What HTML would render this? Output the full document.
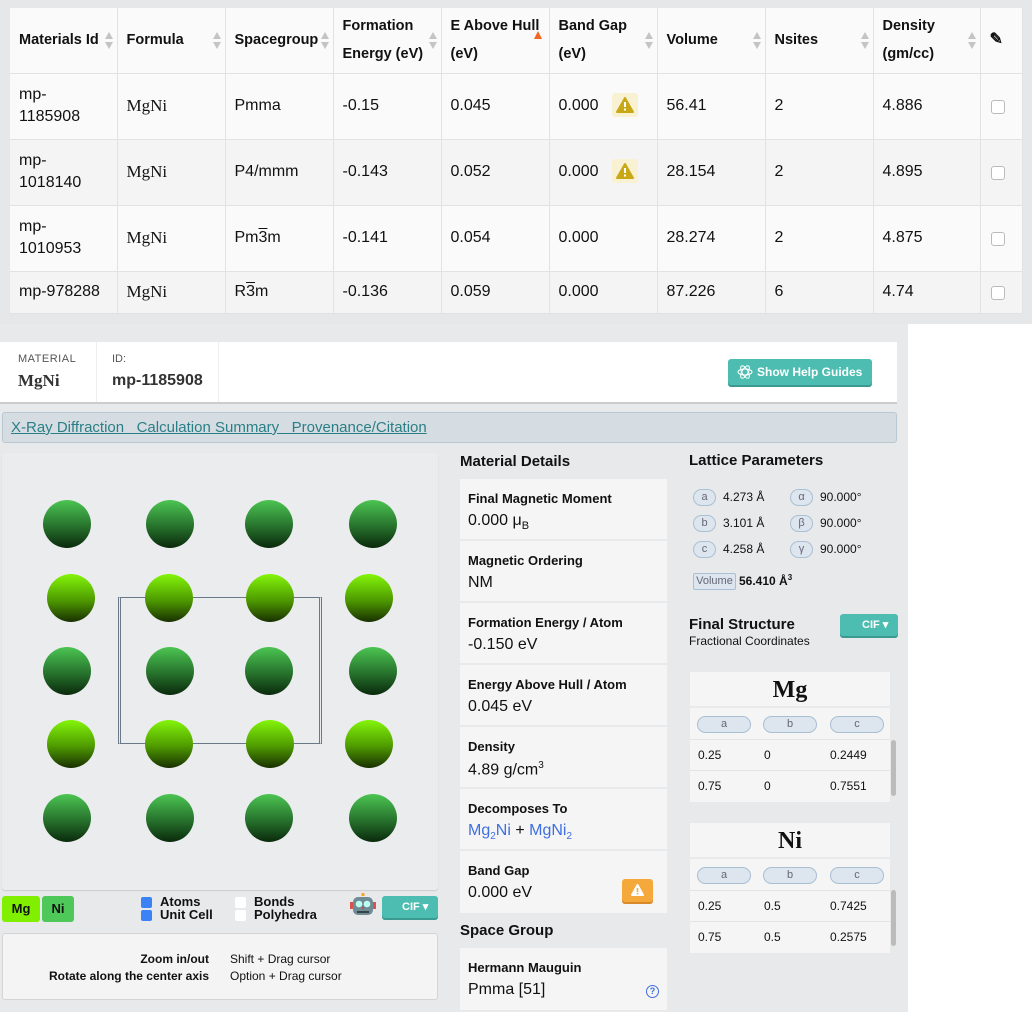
<!DOCTYPE html>
<html><head><meta charset="utf-8">
<style>
*{box-sizing:border-box;margin:0;padding:0}
body{width:1032px;height:1012px;position:relative;background:#fff;font-family:"Liberation Sans",Arial,sans-serif;color:#111;overflow:hidden}
.a{position:absolute}
.top{left:0;top:0;width:1032px;height:324px;background:#e6e7e9}
table.t{position:absolute;left:10px;top:8px;border-collapse:collapse;background:#fafafa;table-layout:fixed;width:1012px}
table.t td,table.t th{border-right:1px solid #e2e2e2;border-bottom:1px solid #e2e2e2;padding:0 9px;text-align:left;vertical-align:middle;font-size:16px;position:relative}
table.t th{font-size:14.5px;font-weight:bold;line-height:28px;height:65px;background:#fafafa;padding-right:6px}
table.t tr.r td{height:66px;line-height:22px}
table.t tr.s td{height:42px;line-height:22px;background:#f4f4f4}
table.t tr:nth-child(odd).r td{background:#f4f4f4}
.srt{position:absolute;right:4px;top:24px;width:8px;height:18px}
.srt:before{content:"";position:absolute;left:0;top:0;border:4px solid transparent;border-bottom:7px solid #c4c4c4;border-top:0}
.srt:after{content:"";position:absolute;left:0;top:10px;border:4px solid transparent;border-top:7px solid #c4c4c4;border-bottom:0}
.serif{font-family:"Liberation Serif",serif;font-size:17px!important}
.ov{text-decoration:overline}
.cb{position:absolute;right:17px;top:50%;margin-top:-6px;width:14px;height:14px;border:1px solid #bbb;border-radius:3px;background:#fff}
.warn{position:absolute;left:62px;top:50%;margin-top:-13px;width:26px;height:24px;background:#f8f1d2;border-radius:3px}
.lower{left:0;top:324px;width:908px;height:688px;background:#e8e9eb}
.atom{position:absolute;width:48px;height:48px;border-radius:50%}
.d{background:linear-gradient(#4cc552,#2a7a30 50%,#0a2a0c)}
.b{background:linear-gradient(#84f50a,#4e9a00 55%,#183000)}
.card{position:absolute;left:460px;width:207px;background:#f5f5f5;border-bottom:2px solid #e8e9eb;padding:12px 8px}
.card .l{font-weight:bold;font-size:13px}
.card .v{font-size:16px;margin-top:6px}
.pill{position:absolute;height:17px;border:1px solid #a9bfd3;background:#dde6ee;border-radius:9px;font-size:11px;color:#667;text-align:center;line-height:15px}
.ct{position:absolute;left:690px;width:200px;background:#f5f5f5}
.ct .h{height:36px;border-bottom:2px solid #e8e9eb;font-family:"Liberation Serif",serif;font-weight:bold;font-size:24px;text-align:center;line-height:36px}
.ct .p{height:32px;border-bottom:1px solid #e4e4e4;position:relative}
.ct .row{height:31px;border-bottom:1px solid #e4e4e4;font-size:12px;position:relative;line-height:31px}
.ct .row span{position:absolute}
.btn{position:absolute;background:#4dbdb1;color:#fff;font-weight:bold;border-radius:3px;box-shadow:0 2px 0 #3a9a90}
</style></head><body>
<div class="a top"></div>
<table class="t">
<colgroup><col style="width:107px"><col style="width:108px"><col style="width:108px"><col style="width:108px"><col style="width:108px"><col style="width:108px"><col style="width:108px"><col style="width:108px"><col style="width:107px"><col style="width:42px"></colgroup>
<tr><th>Materials Id<span class="srt"></span></th><th>Formula<span class="srt"></span></th><th>Spacegroup<span class="srt"></span></th><th>Formation Energy (eV)<span class="srt"></span></th><th>E Above Hull (eV)<span style="position:absolute;left:92px;top:23px;border:4px solid transparent;border-bottom:8px solid #f26522;border-top:0"></span></th><th>Band Gap (eV)<span class="srt"></span></th><th>Volume<span class="srt"></span></th><th>Nsites<span class="srt"></span></th><th>Density (gm/cc)<span class="srt"></span></th><th style="font-size:16px">✎</th></tr>
<tr class="r"><td>mp-<br>1185908</td><td class="serif">MgNi</td><td>Pmma</td><td>-0.15</td><td>0.045</td><td>0.000<span class="warn"><svg width="26" height="24"><path d="M13 5 L21 19 L5 19Z" fill="#c9a818" stroke="#c9a818" stroke-linejoin="round" stroke-width="2"/><rect x="12" y="9" width="2" height="5" fill="#fff"/><rect x="12" y="15.5" width="2" height="2" fill="#fff"/></svg></span></td><td>56.41</td><td>2</td><td>4.886</td><td><span class="cb"></span></td></tr>
<tr class="r"><td>mp-<br>1018140</td><td class="serif">MgNi</td><td>P4/mmm</td><td>-0.143</td><td>0.052</td><td>0.000<span class="warn"><svg width="26" height="24"><path d="M13 5 L21 19 L5 19Z" fill="#c9a818" stroke="#c9a818" stroke-linejoin="round" stroke-width="2"/><rect x="12" y="9" width="2" height="5" fill="#fff"/><rect x="12" y="15.5" width="2" height="2" fill="#fff"/></svg></span></td><td>28.154</td><td>2</td><td>4.895</td><td><span class="cb"></span></td></tr>
<tr class="r"><td>mp-<br>1010953</td><td class="serif">MgNi</td><td>Pm<span class="ov">3</span>m</td><td>-0.141</td><td>0.054</td><td>0.000</td><td>28.274</td><td>2</td><td>4.875</td><td><span class="cb"></span></td></tr>
<tr class="s"><td>mp-978288</td><td class="serif">MgNi</td><td>R<span class="ov">3</span>m</td><td>-0.136</td><td>0.059</td><td>0.000</td><td>87.226</td><td>6</td><td>4.74</td><td><span class="cb"></span></td></tr>
</table>

<div class="a lower"></div>
<div class="a" style="left:0;top:342px;width:897px;height:62px;background:#fff;border-bottom:2px solid #ccc"></div>
<div class="a" style="left:96px;top:342px;width:1px;height:60px;background:#eee"></div>
<div class="a" style="left:218px;top:342px;width:1px;height:60px;background:#eee"></div>
<div class="a" style="left:18px;top:353px;font-size:11px;color:#555;letter-spacing:.5px">MATERIAL</div>
<div class="a" style="left:18px;top:371px;font-size:17px;font-weight:bold;color:#333;font-family:'Liberation Serif',serif">MgNi</div>
<div class="a" style="left:112px;top:353px;font-size:11px;color:#555">ID:</div>
<div class="a" style="left:112px;top:372px;font-size:16px;font-weight:bold;color:#333">mp-1185908</div>
<div class="btn" style="left:728px;top:359px;width:144px;height:26px;font-size:12px;line-height:26px;padding-left:29px">Show Help Guides</div>
<svg class="a" style="left:737px;top:364px" width="16" height="16" fill="none" stroke="#fff" stroke-width="1"><ellipse cx="8" cy="8" rx="7" ry="3"/><ellipse cx="8" cy="8" rx="7" ry="3" transform="rotate(60 8 8)"/><ellipse cx="8" cy="8" rx="7" ry="3" transform="rotate(-60 8 8)"/></svg>
<div class="a" style="left:2px;top:412px;width:895px;height:31px;background:#d6dde2;border:1px solid #b8c8d2;border-radius:3px;font-size:15px;line-height:29px;color:#2a7f86;padding-left:8px;text-decoration:underline">X-Ray Diffraction&nbsp;&nbsp; Calculation Summary&nbsp;&nbsp; Provenance/Citation</div>

<div class="a" style="left:2px;top:453px;width:436px;height:437px;background:#ebecee;border-radius:3px;box-shadow:0 1px 1px #ccc"></div>
<div class="a" style="left:118px;top:597px;width:204px;height:147px;border:1px solid #6a7888;border-left:3px double #6a7888;border-right:3px double #6a7888"></div>
<div class="atom d" style="left:43px;top:500px"></div><div class="atom d" style="left:146px;top:500px"></div><div class="atom d" style="left:245px;top:500px"></div><div class="atom d" style="left:349px;top:500px"></div>
<div class="atom b" style="left:47px;top:574px"></div><div class="atom b" style="left:145px;top:574px"></div><div class="atom b" style="left:246px;top:574px"></div><div class="atom b" style="left:345px;top:574px"></div>
<div class="atom d" style="left:43px;top:647px"></div><div class="atom d" style="left:146px;top:647px"></div><div class="atom d" style="left:245px;top:647px"></div><div class="atom d" style="left:349px;top:647px"></div>
<div class="atom b" style="left:47px;top:720px"></div><div class="atom b" style="left:145px;top:720px"></div><div class="atom b" style="left:246px;top:720px"></div><div class="atom b" style="left:345px;top:720px"></div>
<div class="atom d" style="left:43px;top:794px"></div><div class="atom d" style="left:146px;top:794px"></div><div class="atom d" style="left:245px;top:794px"></div><div class="atom d" style="left:349px;top:794px"></div>

<div class="a" style="left:2px;top:896px;width:38px;height:26px;background:#80f000;border-radius:3px;font-size:13px;font-weight:bold;text-align:center;line-height:26px">Mg</div>
<div class="a" style="left:42px;top:896px;width:32px;height:26px;background:#4fc85a;border-radius:3px;font-size:13px;font-weight:bold;text-align:center;line-height:26px">Ni</div>
<div class="a" style="left:141px;top:897px;width:11px;height:11px;background:#3b82f6;border-radius:2px"></div>
<div class="a" style="left:141px;top:910px;width:11px;height:11px;background:#3b82f6;border-radius:2px"></div>
<div class="a" style="left:160px;top:895px;font-size:13px;font-weight:bold;line-height:13px">Atoms<br>Unit Cell</div>
<div class="a" style="left:235px;top:897px;width:11px;height:11px;background:#fff;border-radius:2px"></div>
<div class="a" style="left:235px;top:910px;width:11px;height:11px;background:#fff;border-radius:2px"></div>
<div class="a" style="left:254px;top:895px;font-size:13px;font-weight:bold;line-height:13px">Bonds<br>Polyhedra</div>
<svg class="a" style="left:349px;top:892px" width="28" height="28"><rect x="12.5" y="1" width="3" height="3" fill="#f5a623"/><rect x="4" y="5" width="20" height="18" rx="5" fill="#6f8b96"/><rect x="1" y="10" width="3" height="7" fill="#d9534f"/><rect x="24" y="10" width="3" height="7" fill="#d9534f"/><circle cx="10" cy="12" r="3.3" fill="#bfe"/><circle cx="18" cy="12" r="3.3" fill="#bfe"/><path d="M13 15 L15 15 L14 18Z" fill="#d33"/><rect x="8" y="19" width="12" height="2" fill="#344"/></svg>
<div class="btn" style="left:382px;top:896px;width:56px;height:22px;font-size:11px;line-height:22px;padding-left:20px">CIF ▾</div>
<div class="a" style="left:2px;top:933px;width:436px;height:67px;background:#f4f4f4;border:1px solid #d4d4d4;border-radius:3px"></div>
<div class="a" style="left:0;top:951px;width:209px;text-align:right;font-size:12px;font-weight:bold;line-height:17px">Zoom in/out<br>Rotate along the center axis</div>
<div class="a" style="left:230px;top:951px;font-size:12px;line-height:17px">Shift + Drag cursor<br>Option + Drag cursor</div>

<div class="a" style="left:460px;top:453px;font-size:15px;font-weight:bold">Material Details</div>
<div class="card" style="top:479px;height:62px"><div class="l">Final Magnetic Moment</div><div class="v">0.000 μ<sub style="font-size:11px">B</sub></div></div>
<div class="card" style="top:541px;height:62px"><div class="l">Magnetic Ordering</div><div class="v">NM</div></div>
<div class="card" style="top:603px;height:62px"><div class="l">Formation Energy / Atom</div><div class="v">-0.150 eV</div></div>
<div class="card" style="top:665px;height:62px"><div class="l">Energy Above Hull / Atom</div><div class="v">0.045 eV</div></div>
<div class="card" style="top:727px;height:62px"><div class="l">Density</div><div class="v">4.89 g/cm<sup style="font-size:10px">3</sup></div></div>
<div class="card" style="top:789px;height:62px"><div class="l">Decomposes To</div><div class="v" style="color:#3e6fe0">Mg<sub style="font-size:10px">2</sub>Ni <span style="color:#111">+</span> MgNi<sub style="font-size:10px">2</sub></div></div>
<div class="card" style="top:851px;height:62px;border:0"><div class="l">Band Gap</div><div class="v">0.000 eV</div></div>
<div class="a" style="left:622px;top:879px;width:31px;height:23px;background:#f6a93b;border-radius:3px;box-shadow:0 2px 0 #d9892a"><svg width="31" height="23"><path d="M15.5 6 L21 16 L10 16Z" fill="#fff" stroke="#fff" stroke-linejoin="round" stroke-width="2"/><rect x="14.7" y="9" width="1.6" height="4" fill="#f6a93b"/><rect x="14.7" y="14" width="1.6" height="1.5" fill="#f6a93b"/></svg></div>
<div class="a" style="left:460px;top:922px;font-size:15px;font-weight:bold">Space Group</div>
<div class="card" style="top:948px;height:64px"><div class="l">Hermann Mauguin</div><div class="v">Pmma [51]</div></div>
<div class="a" style="left:646px;top:985px;width:13px;height:13px;border:1.5px solid #3e6fe0;border-radius:50%;color:#3e6fe0;font-size:9px;font-weight:bold;text-align:center;line-height:10px">?</div>

<div class="a" style="left:689px;top:452px;font-size:15px;font-weight:bold">Lattice Parameters</div>
<div class="pill" style="left:693px;top:489px;width:23px">a</div><div class="a" style="left:723px;top:490px;font-size:12px">4.273 Å</div>
<div class="pill" style="left:693px;top:515px;width:23px">b</div><div class="a" style="left:723px;top:516px;font-size:12px">3.101 Å</div>
<div class="pill" style="left:693px;top:541px;width:23px">c</div><div class="a" style="left:723px;top:542px;font-size:12px">4.258 Å</div>
<div class="pill" style="left:790px;top:489px;width:23px">α</div><div class="a" style="left:820px;top:490px;font-size:12px">90.000°</div>
<div class="pill" style="left:790px;top:515px;width:23px">β</div><div class="a" style="left:820px;top:516px;font-size:12px">90.000°</div>
<div class="pill" style="left:790px;top:541px;width:23px">γ</div><div class="a" style="left:820px;top:542px;font-size:12px">90.000°</div>
<div class="pill" style="left:693px;top:573px;width:43px;border-radius:2px">Volume</div><div class="a" style="left:739px;top:573px;font-size:12px;font-weight:bold">56.410 Å<sup style="font-size:8px">3</sup></div>
<div class="a" style="left:689px;top:616px;font-size:15px;font-weight:bold">Final Structure</div>
<div class="a" style="left:689px;top:634px;font-size:12px">Fractional Coordinates</div>
<div class="btn" style="left:840px;top:614px;width:58px;height:22px;font-size:11px;line-height:22px;padding-left:22px">CIF ▾</div>

<div class="ct" style="top:672px">
<div class="h">Mg</div>
<div class="p"><span class="pill" style="left:7px;top:8px;width:54px">a</span><span class="pill" style="left:73px;top:8px;width:54px">b</span><span class="pill" style="left:140px;top:8px;width:54px">c</span></div>
<div class="row"><span style="left:8px">0.25</span><span style="left:74px">0</span><span style="left:140px">0.2449</span></div>
<div class="row" style="border:0"><span style="left:8px">0.75</span><span style="left:74px">0</span><span style="left:140px">0.7551</span></div>
</div>
<div class="ct" style="top:823px">
<div class="h">Ni</div>
<div class="p"><span class="pill" style="left:7px;top:8px;width:54px">a</span><span class="pill" style="left:73px;top:8px;width:54px">b</span><span class="pill" style="left:140px;top:8px;width:54px">c</span></div>
<div class="row"><span style="left:8px">0.25</span><span style="left:74px">0.5</span><span style="left:140px">0.7425</span></div>
<div class="row" style="border:0"><span style="left:8px">0.75</span><span style="left:74px">0.5</span><span style="left:140px">0.2575</span></div>
</div>
<div class="a" style="left:891px;top:740px;width:5px;height:56px;background:#bbb;border-radius:3px"></div>
<div class="a" style="left:891px;top:890px;width:5px;height:56px;background:#bbb;border-radius:3px"></div>
</body></html>
